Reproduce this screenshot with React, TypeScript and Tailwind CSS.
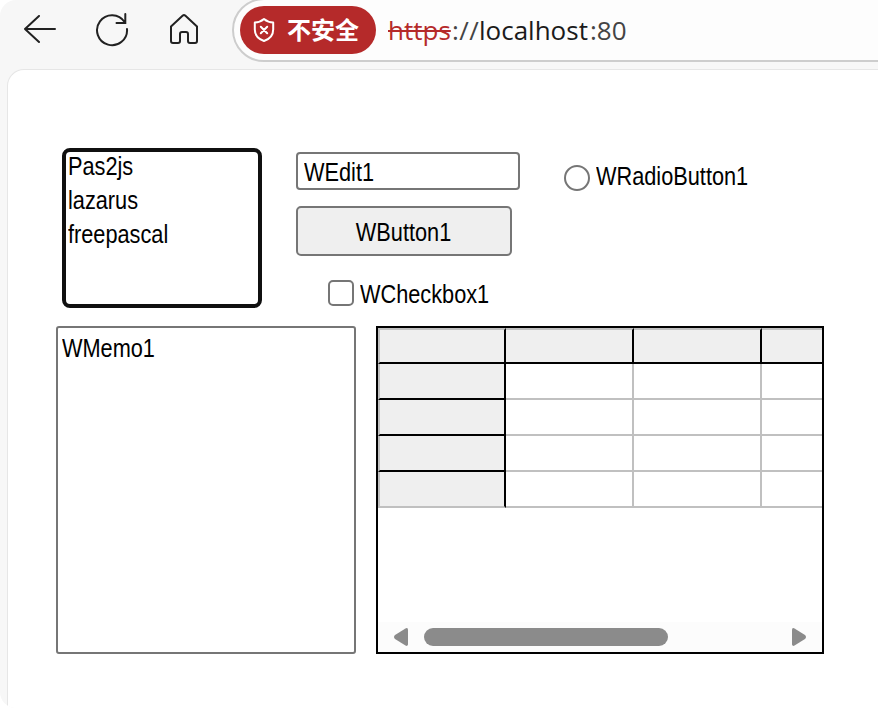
type TextProps = {
    children: string;
    className?: string;
};

const NarrowText = ({ children, className = "origin-left" }: TextProps) => (
    <span
        className={`inline-block whitespace-nowrap scale-x-[0.815] ${className}`}
    >
        {children}
    </span>
);

const BackIcon = () => (
    <svg width="34" height="30" viewBox="0 0 34 30" fill="none">
        <path
            d="M32 14H2M16 1L2 14L16 27"
            stroke="#222"
            strokeWidth="2"
            strokeLinecap="round"
            strokeLinejoin="round"
        />
    </svg>
);

const ReloadIcon = () => (
    <svg width="34" height="34" viewBox="0 0 34 34" fill="none">
        <path
            d="M32 16A15 15 0 1 1 29.6 9M30.3 1V10H21.5"
            stroke="#222"
            strokeWidth="2"
            strokeLinecap="round"
        />
    </svg>
);

const HomeIcon = () => (
    <svg width="30" height="32" viewBox="0 0 30 32" fill="none">
        <path
            d="M2 12.5L13.8 1.6Q15 .6 16.2 1.6L28 12.5V27Q28 29 26 29H21Q19 29 19 27V20Q19 18 17 18H13Q11 18 11 20V27Q11 29 9 29H4Q2 29 2 27Z"
            stroke="#222"
            strokeWidth="2"
            strokeLinejoin="round"
        />
    </svg>
);

const ShieldIcon = () => (
    <svg width="22" height="26" viewBox="0 0 22 26" fill="none">
        <path
            d="M11 2C8 4.5 5 5.5 1.8 5.5V12.5C1.8 18.2 5 22 11 24C17 22 20.2 18.2 20.2 12.5V5.5C17 5.5 14 4.5 11 2Z"
            stroke="#fff"
            strokeWidth="2"
            strokeLinejoin="round"
        />
        <path
            d="M7.8 9.8L14.2 16.2M14.2 9.8L7.8 16.2"
            stroke="#fff"
            strokeWidth="2"
            strokeLinecap="round"
        />
    </svg>
);

const Toolbar = () => (
    <header className="flex h-[69px] shrink-0 overflow-hidden">
        <div className="flex h-[60px] w-[232px] shrink-0 items-center pl-[23px]">
            <div className="w-[72px]">
                <BackIcon />
            </div>
            <div className="w-[74px]">
                <ReloadIcon />
            </div>
            <HomeIcon />
        </div>
        <div className="-mt-0.5 -mr-12 flex h-16 flex-1 items-center rounded-l-full border-2 border-[#cdcdcd] bg-[#fdfdfd] pl-1.5">
            <div className="flex h-12 w-[136px] items-center rounded-full bg-[#b52a2a] pl-[13px] text-white">
                <ShieldIcon />
                <span className="-mt-0.5 ml-3 font-['Noto_Sans_CJK_SC',sans-serif] text-2xl leading-8 font-bold">
                    不安全
                </span>
            </div>
            <div className="ml-3 flex font-['Open_Sans',sans-serif] text-[26px] leading-9 whitespace-nowrap text-[#444]">
                <span className="w-16 text-[#b52a2a] line-through decoration-2">
                    https
                </span>
                <span className="w-[27px] tracking-[0.5px]">://</span>
                <span className="w-[111px] text-[#1b1b1b]">localhost</span>
                <span>:80</span>
            </div>
        </div>
    </header>
);

const ListBox = () => (
    <ul className="h-40 w-[200px] rounded-lg border-4 border-[#101010] bg-white pl-0.5">
        {["Pas2js", "lazarus", "freepascal"].map((item) => (
            <li key={item} className="h-[34px] leading-7">
                <NarrowText>{item}</NarrowText>
            </li>
        ))}
    </ul>
);

const StringGrid = () => (
    <div className="flex h-[328px] w-[448px] flex-col overflow-hidden border-2 border-black bg-white">
        {[0, 1, 2, 3, 4].map((row) => (
            <div key={row} className="flex h-9 shrink-0">
                {[0, 1, 2, 3].map((col) => {
                    const fixed = row === 0 || col === 0;
                    const last = row === 4;
                    return (
                        <div
                            key={col}
                            className={`w-32 shrink-0 border-r-2 border-b-2 ${
                                fixed
                                    ? "border-r-black bg-[#efefef]"
                                    : "border-r-[#c0c0c0]"
                            } ${
                                fixed && !last
                                    ? "border-b-black"
                                    : "border-b-[#c0c0c0]"
                            } ${row === 0 ? "border-t-2 border-t-[#c0c0c0]" : ""} ${
                                col === 0 ? "border-l-2 border-l-[#c0c0c0]" : ""
                            }`}
                        />
                    );
                })}
            </div>
        ))}
        <div className="mt-auto flex h-[30px] items-center bg-[#fcfcfc] pl-4">
            <svg width="14" height="18" viewBox="0 0 14 18" fill="#8b8b8b">
                <path d="M14 1.5V16.5Q13.5 18.5 11.5 17.6L1 11Q-1 9 1 7L11.5.4Q13.5-.5 14 1.5Z" />
            </svg>
            <div className="ml-4 h-[18px] w-[244px] rounded-full bg-[#8b8b8b]" />
            <svg
                className="ml-[124px]"
                width="14"
                height="18"
                viewBox="0 0 14 18"
                fill="#8b8b8b"
            >
                <path d="M0 1.5V16.5Q.5 18.5 2.5 17.6L13 11Q15 9 13 7L2.5.4Q.5-.5 0 1.5Z" />
            </svg>
        </div>
    </div>
);

const App = () => (
    <div className="h-[708px] w-[878px] overflow-hidden bg-white">
        <div className="flex h-full flex-col overflow-hidden rounded-l-2xl bg-[#f7f7f7]">
            <Toolbar />
            <main className="ml-[7px] flex-1 rounded-tl-[17px] border-t border-l border-[#e6e6e6] bg-white pt-[78px] pl-12 font-['Liberation_Sans',Arial,sans-serif] text-[26.67px] leading-[30px] text-black">
                <div className="flex h-[178px] pl-1.5">
                    <ListBox />
                    <div className="ml-[34px] w-56 pt-1">
                        <div className="flex h-[38px] items-center rounded-[4px] border-2 border-[#767676] pt-0.5 pl-1.5">
                            <NarrowText>WEdit1</NarrowText>
                        </div>
                        <button className="mt-4 flex h-[50px] w-[216px] items-center justify-center rounded-[5px] border-2 border-[#767676] bg-[#efefef] pt-0.5">
                            <NarrowText className="origin-center">
                                WButton1
                            </NarrowText>
                        </button>
                        <label className="mt-6 flex h-[26px] items-center pl-8">
                            <span className="size-[26px] shrink-0 rounded-[5px] border-2 border-[#767676]" />
                            <NarrowText className="mt-0.5 ml-1.5 origin-left">
                                WCheckbox1
                            </NarrowText>
                        </label>
                    </div>
                    <label className="mt-[17px] ml-11 flex h-[26px]">
                        <span className="size-[26px] shrink-0 rounded-full border-2 border-[#767676]" />
                        <NarrowText className="-mt-1 ml-1.5 origin-left">
                            WRadioButton1
                        </NarrowText>
                    </label>
                </div>
                <div className="flex gap-5">
                    <div className="h-[328px] w-[300px] rounded-[3px] border-2 border-[#767676] pt-[5px] pl-1">
                        <NarrowText>WMemo1</NarrowText>
                    </div>
                    <StringGrid />
                </div>
            </main>
        </div>
    </div>
);

export default App;
